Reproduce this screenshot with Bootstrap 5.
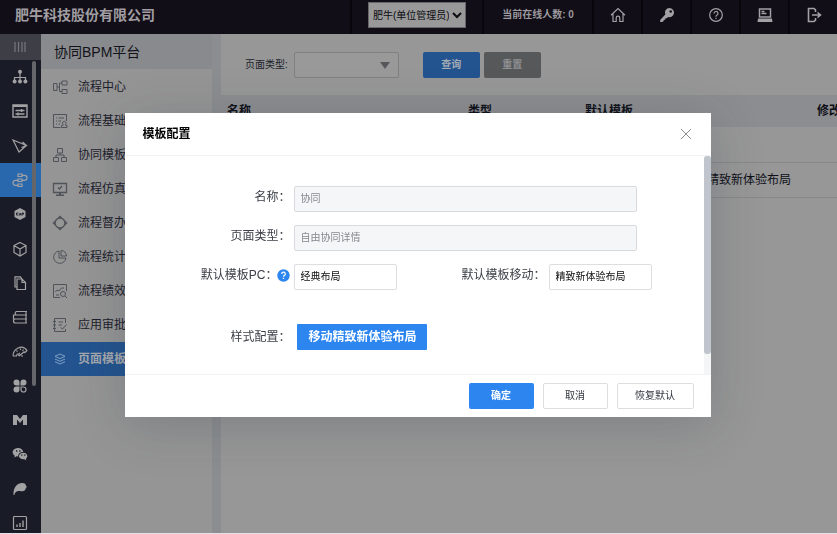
<!DOCTYPE html>
<html lang="zh-CN">
<head>
<meta charset="utf-8">
<meta name="viewport" content="width=device-width, initial-scale=1">
<title>协同BPM平台</title>
<link href="https://cdn.jsdelivr.net/npm/bootstrap@5.3.0/dist/css/bootstrap.min.css" rel="stylesheet">
<style>
  body { font-family: "Liberation Sans", "Noto Sans CJK SC", sans-serif; font-size: 12px; line-height: 18px; background: #979797; color: #1c1f2b; }
  svg { fill: none; stroke: currentColor; stroke-width: 1.2; flex: none; }
  svg .solid { fill: currentColor; stroke: none; }
  .shell { height: 100vh; border-bottom: 1px solid #e4e2e6; }
  .topbar { height: 34px; background: #120e17; color: #9b999e; }
  .brand-name { font-size: 14px; font-weight: 700; color: #a09ea2; padding-left: 15px; }
  .top-cell { border-left: 2px solid #08060b; height: 34px; }
  .top-role { width: 132px; }
  .top-count { width: 110px; font-size: 10px; font-weight: 700; }
  .top-icon { width: 49px; color: #a3a1a6; }
  .role-select { width: 98px; height: 26px; font-size: 10px; background: #999; border: 1px solid #66666b; color: #0c0c12; padding: 0; }
  .rail { width: 41px; background: #191c26; color: #a2a2a4; }
  .rail-toggle { height: 26px; background: #3d3e46; color: #77787e; padding-right: 2px; }
  .rail-list { height: calc(100vh - 54px); flex: none; }
  .rail-list a { color: #a2a2a4; flex: 1 1 0; min-height: 0; padding-right: 2px; }
  .rail-list a.active { background: #2a68ae; }
  .rail-thumb { position: absolute; left: 32px; top: 27px; width: 4px; height: 325px; border-radius: 2px; background: #64666a; }
  .side { width: 171px; background: #959595; }
  .side-title { height: 35px; font-size: 14px; background: #898a8d; color: #12131a; padding-left: 13px; }
  .side-list { padding-top: 1px; }
  .side-list a { height: 34px; color: #1d202b; padding-left: 11px; gap: 10px; }
  .side-list svg { color: #51535a; stroke-width: 1; }
  .side-list a.active { background: #23548f; color: #a5a8ad; font-weight: 700; }
  .side-list a.active svg { color: #7fa0c5; }
  .gutter { width: 9px; background: #8b8d90; }
  .work { background: #979797; min-width: 0; }
  .filters { height: 61px; padding-left: 24px; font-size: 10px; }
  .filters label { margin-right: 6px; }
  .type-select { width: 105px; height: 26px; border: 1px solid #7f8083; background: #999; font-size: 10px; border-radius: 2px; appearance: none; }
  .caret { position: absolute; right: 9px; top: 9px; }
  .btn-sized { height: 26px; font-size: 10px; line-height: 16px; padding: 0 8px; border-radius: 2px; }
  .btn-query, .btn-reset { width: 57px; font-weight: 700; }
  .btn-query { background: #23548f; color: #a3abb5; }
  .btn-reset { background: #57585a; color: #8f9092; }
  .grid-table { width: 720px; table-layout: fixed; margin: 0; }
  .grid-table th, .grid-table td { padding: 0 6px; background: transparent; color: #0e1018; white-space: nowrap; border: 0; vertical-align: middle; }
  .grid-table th { height: 32px; background: #8c8d90; font-weight: 700; }
  .grid-table td { height: 35px; border-bottom: 1px solid #87888b; }
  .dialog-layer { position: fixed; inset: 0; padding-top: 113px; padding-right: 1px; }
  .dialog-box { width: 70%; height: max-content; background: #fff; box-shadow: 0 8px 48px rgba(40, 48, 64, .22); }
  .dialog-head { height: 43px; border-bottom: 1px solid #f1f2f4; padding: 0 18px 0 17px; color: #000; }
  .dialog-head h1 { font-size: 12px; line-height: 18px; font-weight: 700; margin: 0; }
  .close-x { color: #8a8c90; padding: 0; border: 0; background: none; line-height: 0; }
  .close-x svg { stroke-width: 1; }
  .dialog-body { padding: 30px 0 24px; }
  .form-line { margin-bottom: 13px; gap: 4px; }
  .form-line label, .form-line .caption { color: #3d4048; line-height: 22px; height: 26px; }
  .form-line .caption { line-height: 26px; }
  .first-label { width: 165px; }
  .second-label { width: 144px; }
  .field { height: 26px; border: 1px solid #dcdee2; border-radius: 2px; font-size: 10px; padding: 0 5px 3px; color: #111; background: #fff; }
  .field:disabled { background: #f5f6f8; color: #85888e; border-color: #d8dade; }
  .field-long { width: 343px; }
  .field-short { width: 103px; }
  .style-line { margin-top: 34px; }
  .btn-style { font-size: 12px; font-weight: 700; height: 26px; line-height: 18px; padding: 0 11px; border-radius: 1px; margin-left: 3px; }
  .btn-main, .btn-main:hover { background: #2d86f0; color: #fff; }
  .btn-line { border: 1px solid #dcdee2; color: #333640; background: #fff; }
  .btn-w { width: 65px; }
  .btn-ww { width: 77px; }
  .dialog-foot { height: 43px; border-top: 1px solid #f1f2f4; padding: 0 17px; gap: 9px; }
  .track { position: absolute; right: 0; top: 0; bottom: 0; width: 7px; background: #f4f5f7; }
  .thumb { width: 7px; height: 91%; border-radius: 3px; background: #c0c4cc; }
  .hint { stroke: none; margin-top: 5px; }
</style>
</head>
<body>
<div class="shell d-flex flex-column overflow-hidden">
  <header class="topbar d-flex align-items-center flex-shrink-0">
    <div class="brand-name me-auto pb-1">肥牛科技股份有限公司</div>
    <div class="top-cell top-role d-flex align-items-center justify-content-center pb-1">
      <select class="role-select" aria-label="角色"><option>肥牛(单位管理员)</option></select>
    </div>
    <div class="top-cell top-count d-flex align-items-center justify-content-center pb-1">当前在线人数: 0</div>
    <a href="#" class="top-cell top-icon d-flex align-items-center justify-content-center pb-1" aria-label="首页"><svg width="16" height="16" viewBox="0 0 16 16"><path d="M1 8.3 8 1.5l7 6.8M3 7v7.5h3.2V11a1.8 1.8 0 0 1 3.6 0v3.500H13V7"/></svg></a>
    <a href="#" class="top-cell top-icon d-flex align-items-center justify-content-center pb-1" aria-label="密码"><svg width="16" height="16" viewBox="0 0 16 16"><path class="solid" fill-rule="evenodd" d="M10.500 1a4.600 4.600 0 1 1-1.400 9L7.700 11.300 6.400 11.300 6.200 12.700 4.800 12.900 4.500 14.300 3.200 15H1.200V12.900L6.300 7.400A4.600 4.600 0 0 1 10.500 1zm1.200 2.200a1.300 1.300 0 1 0 0 2.600 1.300 1.300 0 0 0 0-2.600z"/></svg></a>
    <a href="#" class="top-cell top-icon d-flex align-items-center justify-content-center pb-1" aria-label="帮助"><svg width="16" height="16" viewBox="0 0 16 16"><circle cx="8" cy="8" r="6.300"/><path d="M6 6.500a2 2 0 1 1 2.800 1.800c-.6.300-.8.600-.8 1.400M8 10.700v1.300"/></svg></a>
    <a href="#" class="top-cell top-icon d-flex align-items-center justify-content-center pb-1" aria-label="桌面"><svg width="16" height="16" viewBox="0 0 16 16"><path d="M2.500 2h11v8h-11zM4.500 4.500h3M4.500 6.500h5" stroke-width="1.500"/><path class="solid" d="M1 11.500h14l.5 3.500H.5z"/></svg></a>
    <a href="#" class="top-cell top-icon d-flex align-items-center justify-content-center pb-1" aria-label="退出"><svg width="16" height="16" viewBox="0 0 16 16"><path d="M9.500 5V2.800L8 1.500H2.500v13H8l1.500-1.300V11M6 8h8.500M11.500 5.500 14.500 8l-3 2.500" stroke-width="1.600"/></svg></a>
  </header>

  <div class="d-flex flex-grow-1 overflow-hidden">
    <nav class="rail flex-shrink-0 position-relative overflow-hidden" aria-label="模块">
      <div class="rail-toggle d-flex align-items-center justify-content-center"><svg width="14" height="14" viewBox="0 0 14 14"><path d="M2 2v10M5.500 2v10M9 2v10M12 2v10"/></svg></div>
      <div class="rail-list d-flex flex-column">
        <a href="#" class="d-flex align-items-center justify-content-center" aria-label="组织"><svg width="16" height="16" viewBox="0 0 16 16"><path d="M8 3v9M2.500 12V8.500h11V12"/><circle class="solid" cx="8" cy="2.800" r="2"/><circle class="solid" cx="2.600" cy="12.500" r="2"/><circle class="solid" cx="8" cy="12.500" r="2"/><circle class="solid" cx="13.400" cy="12.500" r="2"/></svg></a>
        <a href="#" class="d-flex align-items-center justify-content-center" aria-label="设置"><svg width="16" height="16" viewBox="0 0 16 16"><path d="M1 2h14v12H1zM1 3.300h14M3.500 7.500h9M3.500 11h9M9.500 6v3M6 9.500v3" stroke-width="1.400"/></svg></a>
        <a href="#" class="d-flex align-items-center justify-content-center" aria-label="发送"><svg width="16" height="16" viewBox="0 0 16 16"><path d="M1 2 14.500 7.500 7 14zM10.500 4 14.500 7.500l-5 2"/></svg></a>
        <a href="#" class="active d-flex align-items-center justify-content-center" aria-label="流程"><svg width="16" height="16" viewBox="0 0 16 16"><path d="M6 2h4v2.500H6zM6 7h4v2.500H6zM6 12h4v2.500H6zM10 3.300h2.500a2.400 2.400 0 0 1 0 5H10M6 8.300H3.500a2.400 2.400 0 0 0 0 5H6"/></svg></a>
        <a href="#" class="d-flex align-items-center justify-content-center" aria-label="CAP"><svg width="16" height="16" viewBox="0 0 16 16"><path class="solid" d="m8 2 5.500 3v6L8 14l-5.500-3V5z"/><path d="M6.500 7H4.500v2h2M7.300 9.500 8.200 7l.8 2.500M10 9.500V7h1.500v1.200H10" stroke="#191c26" stroke-width=".9"/></svg></a>
        <a href="#" class="d-flex align-items-center justify-content-center" aria-label="应用"><svg width="16" height="16" viewBox="0 0 16 16"><path d="m8 1.500 6 3v7l-6 3.500-6-3.500v-7zM2 4.500 8 8l6-3.500M8 8v7"/></svg></a>
        <a href="#" class="d-flex align-items-center justify-content-center" aria-label="文档"><svg width="16" height="16" viewBox="0 0 16 16"><path d="M5 4h5l3.500 3.500v7H5zM10 4v3.500h3.500M5 12H3V1.800h5.500L10 4"/></svg></a>
        <a href="#" class="d-flex align-items-center justify-content-center" aria-label="档案"><svg width="16" height="16" viewBox="0 0 16 16"><path d="M15 2.500H4.500a1.800 1.800 0 0 0 0 3.500H15M14 2.500V6M1 6h14M1.500 6v4H14V6M15 10H3.500a2 2 0 0 0 0 4H15M14 10v4"/></svg></a>
        <a href="#" class="d-flex align-items-center justify-content-center" aria-label="仪表"><svg width="16" height="16" viewBox="0 0 16 16"><path d="M1 13C1 6 10 .5 15 7.500L12.500 10M1 13h3.500l1-2.500M4.500 7.500l1 1M8.500 5.500V7M11.500 6.500l-1 1.500M7 13l5.500-4.500M7 13a2 2 0 0 1 1-3M9 13h2"/></svg></a>
        <a href="#" class="d-flex align-items-center justify-content-center" aria-label="插件"><svg width="16" height="16" viewBox="0 0 16 16"><path class="solid" d="M4.500 1.500a3 3 0 0 1 3 3v3h-3a3 3 0 0 1 0-6zM11.500 1.500a3 3 0 0 1 0 6h-3v-3a3 3 0 0 1 3-3zM4.500 8.500h3v3a3 3 0 1 1-3-3z"/><path d="M9 9h2.500a2.500 2.500 0 1 1-2.500 2.500z"/></svg></a>
        <a href="#" class="d-flex align-items-center justify-content-center" aria-label="门户"><svg width="16" height="16" viewBox="0 0 16 16"><path class="solid" d="M1 3h4l3 4 3-4h4v10h-4V7.500L8 11 5 7.500V13H1z"/></svg></a>
        <a href="#" class="d-flex align-items-center justify-content-center" aria-label="微信"><svg width="16" height="16" viewBox="0 0 16 16"><path class="solid" fill-rule="evenodd" d="M6 2c3 0 5 1.700 5.200 4C8 6 6 8 6.300 10.400L4.500 10.300 2.500 11.500 2.700 9.700C.3 8 0 5.500 1.800 3.500A6 6 0 0 1 6 2zM4 4.300v1.400h1.300V4.300zm3.200 0v1.400h1.300V4.300z"/><path class="solid" fill-rule="evenodd" d="M11.300 6.700c4 0 5.200 4 2.700 6l.2 1.600-1.900-1C9 13.600 7 12 7 10c0-2 2-3.300 4.300-3.300zM9.200 8.500v1.200h1.200V8.500zm3 0v1.200h1.200V8.500z"/></svg></a>
        <a href="#" class="d-flex align-items-center justify-content-center" aria-label="飞鸟"><svg width="16" height="16" viewBox="0 0 16 16"><path class="solid" d="M1.500 14C1 8 4 2.500 9.500 2c3-.2 4.500 1 4.500 3l1 1-1 .8C13.500 10 11 11 8 10 5 9.500 3 11 2.300 14z"/></svg></a>
        <a href="#" class="d-flex align-items-center justify-content-center" aria-label="报表"><svg width="16" height="16" viewBox="0 0 16 16"><rect x="1.500" y="1.500" width="13" height="13" rx="1"/><path d="M5 12v-2.500M8 12V8M11 12V5.500" stroke-width="1.400"/></svg></a>
      </div>
      <div class="rail-thumb"></div>
    </nav>

    <aside class="side flex-shrink-0">
      <div class="side-title d-flex align-items-center">协同BPM平台</div>
      <nav class="side-list" aria-label="流程菜单">
        <a href="#" class="d-flex align-items-center text-decoration-none"><svg width="16" height="16" viewBox="0 0 16 16"><path d="M1.500 4.500h3.500v7H1.500zM10 2h5v4h-5zM10 10.500h5v4h-5zM5 8h2.500M10 4H7.500v8.500H10"/></svg>流程中心</a>
        <a href="#" class="d-flex align-items-center text-decoration-none"><svg width="16" height="16" viewBox="0 0 16 16"><path d="M8.500 14.500h-7v-13h13V8M4 5h1M6.500 5H12M4 8h1M6.500 8H9M4 11h1M6.500 11H8M9.500 14.500h5.500v-2l-2-.7a1.800 1.800 0 1 0-1.500 0l-2 .7z"/></svg>流程基础</a>
        <a href="#" class="d-flex align-items-center text-decoration-none"><svg width="16" height="16" viewBox="0 0 16 16"><path d="M5.500 1.500h5v4.500h-5zM1.500 10.500h5v4h-5zM9.500 10.500h5v4h-5zM8 6v2M4 10.500V8h8v2.500"/></svg>协同模板</a>
        <a href="#" class="d-flex align-items-center text-decoration-none"><svg width="16" height="16" viewBox="0 0 16 16"><path d="M1.500 2.500h13v9h-13zM6 6.500l1.500 1.500L10 5" stroke-width="1.300"/><path class="solid" d="M7 11.500h2v2h3V15H4v-1.500h3z"/></svg>流程仿真</a>
        <a href="#" class="d-flex align-items-center text-decoration-none"><svg width="16" height="16" viewBox="0 0 16 16"><circle cx="8" cy="8" r="5" stroke-width="1.500"/><path d="M6.500 3 8 1.500 9.500 3M13 6.500 14.500 8 13 9.500M6.500 13 8 14.500 9.500 13M3 6.500 1.500 8 3 9.500" stroke-width="1.500"/></svg>流程督办</a>
        <a href="#" class="d-flex align-items-center text-decoration-none"><svg width="16" height="16" viewBox="0 0 16 16"><path d="M7 2A6.200 6.200 0 1 0 14 9H7zM9 1.500V7h5.500A6 6 0 0 0 9 1.500z"/></svg>流程统计</a>
        <a href="#" class="d-flex align-items-center text-decoration-none"><svg width="16" height="16" viewBox="0 0 16 16"><path d="M8 14.500H1.500v-13h13V8M3.500 9a2 2 0 0 1 3.500-1l2.500-3H12M4 12h3"/><circle cx="11" cy="11" r="2.500"/><path d="m13 13 2 2"/></svg>流程绩效</a>
        <a href="#" class="d-flex align-items-center text-decoration-none"><svg width="16" height="16" viewBox="0 0 16 16"><path d="M13.500 6V1.500h-11v13h11V12M1 4.500h3M1 8h3M1 11.500h3M6.500 5H11M6.500 8H10M8.500 10.500l2 1.500 4-4.500"/></svg>应用审批</a>
        <a href="#" class="active d-flex align-items-center text-decoration-none"><svg width="16" height="16" viewBox="0 0 16 16"><path d="m8 3 5 2.300-5 2.300-5-2.300zM3 8l5 2.300L13 8M3 10.700 8 13l5-2.300"/></svg>页面模板</a>
      </nav>
    </aside>
    <div class="gutter flex-shrink-0"></div>

    <main class="work flex-grow-1 overflow-hidden">
      <form class="filters d-flex align-items-center">
        <label for="ptype">页面类型:</label>
        <div class="position-relative me-4">
          <select id="ptype" class="type-select d-block"><option></option></select>
          <svg class="caret" width="10" height="8" viewBox="0 0 10 8"><path d="M0 1h10L5 8z" fill="#55575b" stroke="none"/></svg>
        </div>
        <button type="button" class="btn btn-sized btn-query border-0">查询</button>
        <button type="button" class="btn btn-sized btn-reset border-0 ms-1">重置</button>
      </form>
      <table class="table grid-table">
        <colgroup><col style="width:241px"><col style="width:117px"><col style="width:122px"><col style="width:110px"><col></colgroup>
        <thead><tr><th>名称</th><th>类型</th><th colspan="2">默认模板</th><th>修改</th></tr></thead>
        <tbody>
          <tr><td></td><td></td><td></td><td></td><td></td></tr>
          <tr><td></td><td></td><td></td><td>精致新体验布局</td><td></td></tr>
        </tbody>
      </table>
    </main>
  </div>
</div>

<div class="dialog-layer d-flex justify-content-center align-items-start">
  <section class="dialog-box" role="dialog" aria-labelledby="dlg-title">
    <div class="dialog-head d-flex align-items-center justify-content-between">
      <h1 id="dlg-title">模板配置</h1>
      <button type="button" class="close-x" aria-label="关闭"><svg width="14" height="14" viewBox="0 0 14 14"><path d="m2 2 10 10M12 2 2 12"/></svg></button>
    </div>
    <div class="position-relative">
      <form class="dialog-body">
        <div class="form-line d-flex"><label class="first-label text-end" for="f-name">名称：</label><input id="f-name" class="field field-long" value="协同" disabled></div>
        <div class="form-line d-flex"><label class="first-label text-end" for="f-type">页面类型：</label><input id="f-type" class="field field-long" value="自由协同详情" disabled></div>
        <div class="form-line d-flex mb-0">
          <div class="first-label d-flex justify-content-end"><label for="f-pc">默认模板PC：</label><svg class="hint" width="13" height="13" viewBox="0 0 13 13"><circle cx="6.500" cy="6.500" r="6.200" fill="#2d86f0"/><path d="M4.700 5a1.800 1.800 0 1 1 2.500 1.600c-.5.300-.7.500-.7 1.200M6.500 8.800v1.200" stroke="#fff"/></svg></div>
          <input id="f-pc" class="field field-short" value="经典布局">
          <label class="second-label text-end" for="f-mob">默认模板移动：</label><input id="f-mob" class="field field-short" value="精致新体验布局">
        </div>
        <div class="form-line style-line d-flex mb-0"><span class="caption first-label text-end">样式配置：</span><button type="button" class="btn btn-main btn-style border-0">移动精致新体验布局</button></div>
      </form>
      <div class="track"><div class="thumb"></div></div>
    </div>
    <div class="dialog-foot d-flex align-items-center justify-content-end">
      <button type="button" class="btn btn-sized btn-main btn-w border-0 fw-bold">确定</button>
      <button type="button" class="btn btn-sized btn-line btn-w">取消</button>
      <button type="button" class="btn btn-sized btn-line btn-ww">恢复默认</button>
    </div>
  </section>
</div>
<script src="https://cdn.jsdelivr.net/npm/bootstrap@5.3.0/dist/js/bootstrap.bundle.min.js"></script>
</body>
</html>
